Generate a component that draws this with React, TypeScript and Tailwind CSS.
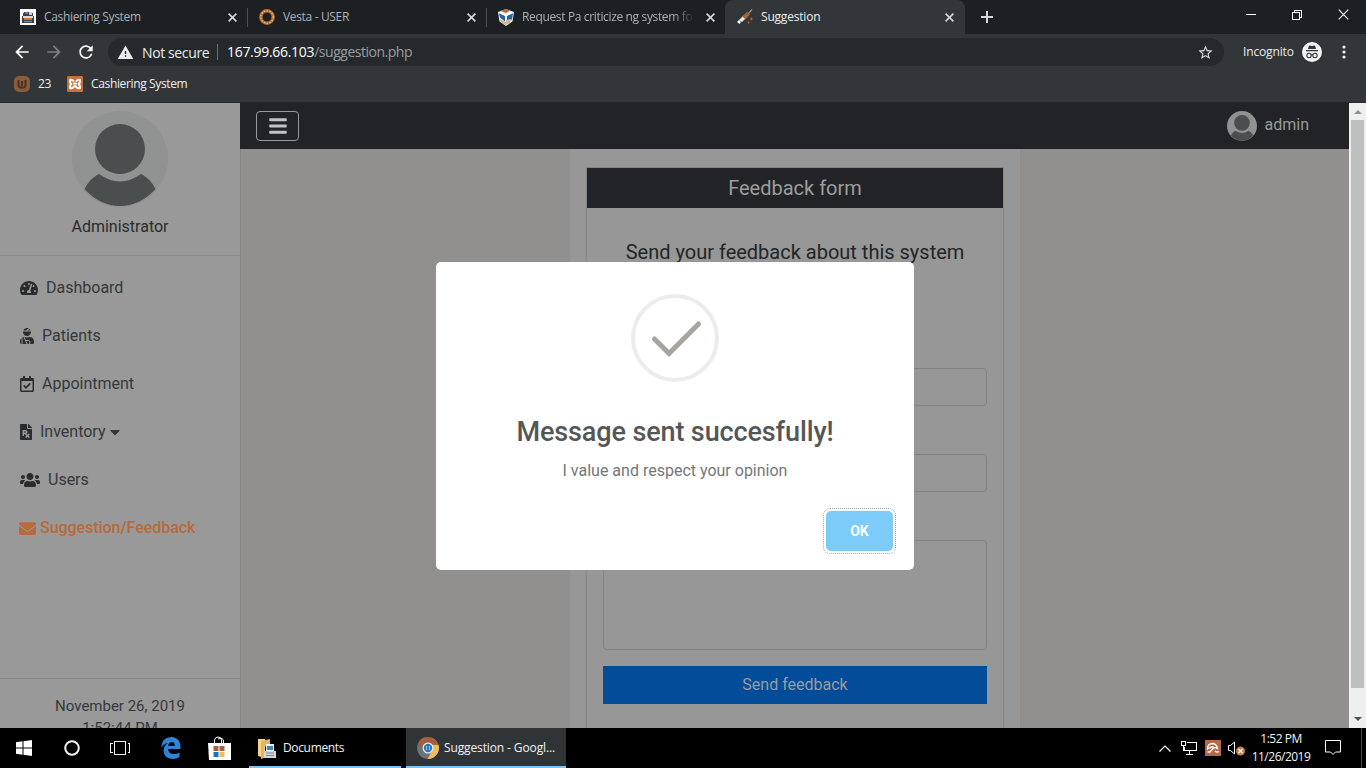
import type { ReactNode } from 'react'
import {
  FaBars,
  FaCaretDown,
  FaEnvelope,
  FaFilePrescription,
  FaRegCalendarCheck,
  FaTachometerAlt,
  FaUserInjured,
  FaUsers,
} from 'react-icons/fa'
import { MdArrowBack, MdArrowForward, MdRefresh, MdStarBorder, MdWarning } from 'react-icons/md'

interface Tab {
  title: string
  icon: ReactNode
  active?: boolean
}

const RegisterIcon = () => (
  <svg width="16" height="16" viewBox="0 0 16 16" shapeRendering="crispEdges">
    <rect width="16" height="16" fill="#fff" />
    <path d="M4 3h8l2 5v6H2V8z" fill="#3b4148" />
    <rect x="5" y="3" width="3" height="2" fill="#4c7fb5" />
    <rect x="9" y="3" width="3" height="3" fill="#cfd6dc" />
    <rect x="3" y="7" width="10" height="2" fill="#d8dadc" />
    <rect x="4" y="9" width="8" height="2" fill="#c8793f" />
    <rect x="4" y="12" width="8" height="1" fill="#8a9096" />
  </svg>
)

const VestaIcon = () => (
  <svg width="16" height="16" viewBox="0 0 16 16">
    <circle cx="8" cy="8" r="6.2" fill="none" stroke="#b06c38" strokeWidth="3.4" />
    <circle cx="8" cy="8" r="6.2" fill="none" stroke="#f0bd7c" strokeWidth="1.2" strokeDasharray="1.6 1.2" />
  </svg>
)

const CubeIcon = () => (
  <svg width="16" height="17" viewBox="0 0 16 17">
    <path d="M0 3L8 0l8 3-1.500 9.500L8 17l-6.500-4.500z" fill="#e9eef2" />
    <path d="M3 2l5-2 4 1.600-4 2.400z" fill="#b5643a" />
    <path d="M1 4.500l6 2v6L2 8.500zM9 6.500l6-2-1 6L9 12z" fill="#1f62a8" />
    <path d="M2 10l6 3v3.500L3 13zM8 11l5-1-1 4-4 2z" fill="#d8b48c" />
    <path d="M7 5h2l3-2 2 1-5 3v3H7V7L3 5l1-1z" fill="#fff" />
  </svg>
)

const SyringeIcon = () => (
  <svg width="16" height="16" viewBox="0 0 16 16">
    <path d="M11 5L15 .5" stroke="#8d8f90" strokeWidth="1.300" />
    <path d="M5 7.500L10 3l3 2.500L8 11z" fill="#a9623a" />
    <path d="M2 11l3.500-3.500L8 10 5 13z" fill="#e6e8e8" />
    <path d="M0 13l2-2L4 13l-1.500 2z" fill="#fff" />
    <path d="M12.800 10l1.500-2 1.500 2-1.500 1.500zM10.500 13.500l1-1.500 1.200 1.500-1.200 1.500z" fill="#a9623a" />
  </svg>
)

const tabs: Tab[] = [
  { title: 'Cashiering System', icon: <RegisterIcon /> },
  { title: 'Vesta - USER', icon: <VestaIcon /> },
  { title: 'Request Pa criticize ng system fo', icon: <CubeIcon /> },
  { title: 'Suggestion', icon: <SyringeIcon />, active: true },
]

const navItems = [
  { label: 'Dashboard', icon: <FaTachometerAlt size={18} /> },
  { label: 'Patients', icon: <FaUserInjured size={16} className="-mr-px -ml-px w-4" /> },
  { label: 'Appointment', icon: <FaRegCalendarCheck size={16} className="-mr-px -ml-px w-4" /> },
  { label: 'Inventory', icon: <FaFilePrescription size={16} className="w-3" />, caret: true },
  { label: 'Users', icon: <FaUsers size={20} /> },
]

function Cross({ size = 9, width = 1.6 }: { size?: number; width?: number }) {
  return (
    <svg width={size} height={size} viewBox="0 0 9 9" stroke="currentColor" strokeWidth={width}>
      <path d="M.6.6l7.800 7.800M8.400.6L.6 8.400" />
    </svg>
  )
}

function Avatar({ size, dim }: { size: number; dim?: boolean }) {
  return (
    <svg width={size} height={size} viewBox="0 0 96 96">
      <circle cx="48" cy="48" r="48" fill={dim ? '#8f9192' : '#919292'} />
      <circle cx="48" cy="38" r="25" fill="#4b4e4f" />
      <path d="M27 63Q48 78 69 63q9 4 14.500 15Q68 95 48 95T12.500 78Q18 67 27 63z" fill="#4b4e4f" />
    </svg>
  )
}

function TabStrip() {
  return (
    <div className="flex h-[34px] bg-[#1d2023] pl-2">
      {tabs.map((tab, i) => (
        <div
          key={tab.title}
          className={`relative flex items-center pl-3 ${
            tab.active
              ? 'w-60 rounded-t-lg bg-[#323639] pr-[11px] text-[#eceeef]'
              : 'w-[239px] pr-[10px] text-[#a9b1b8]'
          }`}
        >
          <span className="flex w-6 shrink-0">{tab.icon}</span>
          <span
            className={`flex-1 text-[12px] whitespace-nowrap ${
              i === 2
                ? 'tracking-[-0.35px] [mask-image:linear-gradient(to_right,black_88%,transparent)]'
                : i === 3
                  ? 'tracking-[-0.2px]'
                  : 'tracking-[-0.34px]'
            }`}
          >
            {tab.title}
          </span>
          <span className="ml-3 text-[#d5d8da]">
            <Cross />
          </span>
          {i < 2 && <span className="absolute top-2 -right-px h-[19px] w-px bg-[#4b4f53]" />}
        </div>
      ))}
      <div className="flex items-center pl-4 text-[#d5d8da]">
        <svg width="12" height="12" viewBox="0 0 12 12" stroke="currentColor" strokeWidth="2">
          <path d="M6 0v12M0 6h12" />
        </svg>
      </div>
      <div className="ml-auto flex h-[29px] items-center text-white">
        <span className="flex w-[46px] justify-center">
          <span className="h-px w-[10px] bg-white" />
        </span>
        <span className="flex w-[46px] justify-center">
          <svg width="10" height="10" viewBox="0 0 10 10" fill="none" stroke="currentColor" shapeRendering="crispEdges">
            <path d="M.5 2.500h7v7h-7zM2.500 2.500v-2h7v7h-2" />
          </svg>
        </span>
        <span className="flex w-[46px] justify-center">
          <Cross size={11} width={0.9} />
        </span>
      </div>
    </div>
  )
}

function AddressBar() {
  return (
    <div className="flex h-9 items-center bg-[#323639] pr-5 pl-3 text-[#e8eaec]">
      <MdArrowBack size={20} className="text-white" />
      <MdArrowForward size={20} className="ml-3 text-[#7b7f82]" />
      <MdRefresh size={20} className="ml-3 text-white" />
      <div className="ml-3 flex h-7 flex-1 items-center rounded-full bg-[#26292c] pr-[10px] pl-[9px] text-[14px] tracking-[-0.38px]">
        <MdWarning size={17} />
        <span className="ml-2 w-[75px] whitespace-nowrap">Not secure</span>
        <span className="mr-[9px] h-4 w-px bg-[#6c7073]" />
        <span className="pb-px tracking-[-0.3px] text-white">167.99.66.103</span>
        <span className="pb-px tracking-[-0.48px] text-[#979da2]">/suggestion.php</span>
        <MdStarBorder size={17} className="ml-auto text-[#d5d8da]" />
      </div>
      <span className="ml-[19px] w-[59px] text-[12px] tracking-[-0.15px]">Incognito</span>
      <svg width="20" height="20" viewBox="0 0 20 20">
        <circle cx="10" cy="10" r="10" fill="#f1f3f4" />
        <path d="M7 3.500l3 .6 3-.6 1 3.500H6zM4 8h12v1.200H4z" fill="#303437" />
        <g fill="none" stroke="#303437" strokeWidth="1.100">
          <circle cx="7" cy="13.500" r="2.200" />
          <circle cx="13" cy="13.500" r="2.200" />
          <path d="M9 13q1-.6 2 0" />
        </g>
      </svg>
      <svg width="4" height="14" viewBox="0 0 4 14" fill="#f1f3f4" className="ml-5">
        <circle cx="2" cy="2" r="1.600" />
        <circle cx="2" cy="7" r="1.600" />
        <circle cx="2" cy="12" r="1.600" />
      </svg>
    </div>
  )
}

function Bookmarks() {
  return (
    <div className="flex h-[33px] items-center border-b border-[#26292b] bg-[#323639] pb-[5px] pl-[14px] text-[12px] tracking-[-0.36px] text-[#eceeef]">
      <svg width="16" height="16" viewBox="0 0 16 16" className="mt-px">
        <rect width="16" height="16" rx="5" fill="#8a5a3c" />
        <path d="M4.500 4v5q0 3 3.500 2.500 3.500.5 3.500-2.500V4M8 5v5" fill="none" stroke="#4a3226" strokeWidth="2" />
      </svg>
      <span className="ml-2">23</span>
      <svg width="16" height="16" viewBox="0 0 16 16" className="mt-px ml-4">
        <rect width="16" height="16" rx="1" fill="#c9703a" />
        <g fill="none" stroke="#fff" strokeWidth="2" strokeLinecap="round" strokeLinejoin="round">
          <path d="M6.500 5Q5 3 3 4q-.5 2.500 1.500 4-2 1.500-1.500 4 2.500 1 4-1.500l1-.5 1 .5q1.500 2.500 4 1.500.5-2.500-1.500-4 2-1.500 1.500-4-2-1-3.500 1" />
          <path d="M7 7.500h2" />
        </g>
      </svg>
      <span className="ml-2">Cashiering System</span>
    </div>
  )
}

function Sidebar() {
  return (
    <aside className="flex w-[241px] shrink-0 flex-col border-r border-[#858585] bg-[#999999] text-[#35383a]">
      <div className="flex h-[153px] flex-col items-center border-b border-[#8c8c8c] pt-2">
        <Avatar size={96} />
        <span className="mt-2 text-[16px] leading-6 text-[#2a2c2e]">Administrator</span>
      </div>
      <nav className="flex flex-col pt-2">
        {navItems.map(item => (
          <a key={item.label} className="flex h-12 items-center gap-2 pl-5">
            <span className="flex pb-px text-[#2a2d2f]">{item.icon}</span>
            <span>{item.label}</span>
            {item.caret && <FaCaretDown size={16} className="-ml-[7px]" />}
          </a>
        ))}
        <a className="flex h-12 items-center gap-1 pl-[19px] font-medium tracking-[-0.05px] text-[#b9693a]">
          <FaEnvelope size={17} />
          <span>Suggestion/Feedback</span>
        </a>
      </nav>
      <div className="mt-auto h-[50px] overflow-hidden border-t border-[#858585] pt-4 text-center text-[15px] leading-[22px]">
        <p>November 26, 2019</p>
        <p>1:52:44 PM</p>
      </div>
    </aside>
  )
}

function FeedbackForm() {
  return (
    <div className="mx-auto w-[450px] bg-[#979797] px-4 pt-[18px]">
      <div className="flex h-full flex-col border-x border-t border-[#858585]">
        <h2 className="h-10 bg-[#222326] text-center text-[20px] leading-10 text-[#9d9d9d]">Feedback form</h2>
        <div className="flex flex-col px-4">
          <h3 className="mt-8 text-center text-[20px] leading-6 text-[#222527]">Send your feedback about this system</h3>
          <div className="mt-[104px] h-[38px] rounded border border-[#808384]" />
          <div className="mt-12 h-[38px] rounded border border-[#808384]" />
          <div className="mt-12 h-[110px] rounded border border-[#808384]" />
          <button className="mt-4 h-[38px] bg-[#034c9a] text-[16px] text-[#9c9c9c]">Send feedback</button>
        </div>
      </div>
    </div>
  )
}

function SuccessModal() {
  return (
    <div className="absolute top-[262px] left-[436px] flex h-[308px] w-[478px] flex-col items-center rounded-[5px] bg-white pt-8 font-[Roboto,sans-serif]">
      <svg width="88" height="88" viewBox="0 0 88 88" fill="none">
        <circle cx="44" cy="44" r="42" stroke="#ebecec" strokeWidth="4" />
        <path d="M23.500 45L38 59.500 67.500 30" stroke="#a6a59f" strokeWidth="5" strokeLinecap="round" />
      </svg>
      <h1 className="mt-[30px] text-[27px] leading-10 font-medium tracking-[-0.12px] text-[#555757]">
        Message sent succesfully!
      </h1>
      <p className="mt-[7px] text-[16px] leading-6 text-[#747778]">I value and respect your opinion</p>
      <button className="mt-[25px] mr-[18px] h-[46px] w-[73px] self-end rounded-[7px] border border-dotted border-[#8babb8] p-[2px]">
        <span className="flex h-full items-center justify-center rounded-[5px] bg-[#7ccbf8] text-[14px] font-bold text-white">
          OK
        </span>
      </button>
    </div>
  )
}

function Scrollbar() {
  return (
    <div className="flex w-[17px] shrink-0 flex-col items-center bg-[#eef0ef]">
      <div className="flex h-[17px] items-center text-[#8f9291]">
        <svg width="8" height="4" viewBox="0 0 8 4" fill="currentColor">
          <path d="M4 0l4 4H0z" />
        </svg>
      </div>
      <div className="h-[568px] w-[13px] bg-[#bcbfbd]" />
      <div className="mt-auto flex h-[18px] items-center text-[#4d5150]">
        <svg width="8" height="4" viewBox="0 0 8 4" fill="currentColor">
          <path d="M0 0h8L4 4z" />
        </svg>
      </div>
    </div>
  )
}

function Taskbar() {
  return (
    <div className="flex h-10 items-center bg-black text-[12px] tracking-[-0.2px] text-[#f2f2f2]">
      <svg width="16" height="16" viewBox="0 0 16 16" fill="#fff" className="ml-4">
        <path d="M0 2.300L6.500 1.300v6.200H0zM7.500 1.200L16 0v7.500H7.500zM0 8.500h6.500v6.200L0 13.700zM7.500 8.500H16V16l-8.500-1.200z" />
      </svg>
      <svg width="16" height="16" viewBox="0 0 16 16" fill="none" stroke="#f2f2f2" strokeWidth="2" className="ml-8">
        <circle cx="8" cy="8" r="6.800" />
      </svg>
      <svg
        width="20"
        height="14"
        viewBox="0 0 20 14"
        fill="none"
        stroke="#f2f2f2"
        shapeRendering="crispEdges"
        className="ml-[30px]"
      >
        <path d="M4.500.5h11v13h-11zM2.500 2.500h-2v9h2M17.500 2.500h2v9h-2" />
      </svg>
      <svg width="20" height="22" viewBox="0 0 20 22" className="ml-[31px]">
        <path
          d="M0 11Q1 0 10.500 0 20 .5 19.500 12H7q.5 5 6 5 3 0 5.500-1.500V20q-3 2-7 2-8.500-.5-9-8.500Q3 8 7 6 2.500 6.500 0 11zM7.200 9h6.600q0-4-3.100-4Q7.800 5 7.200 9z"
          fill="#2b86d9"
        />
      </svg>
      <svg width="24" height="24" viewBox="0 0 24 24" className="ml-[26px]">
        <path d="M7.500 8V4Q8 1 11 1q3.500 0 3.500 3v4M11 3q5-2 5.500 2v2" fill="none" stroke="#fff" />
        <path d="M1 7h23v17H2z" fill="#fff" />
        <path d="M6.500 10h5v5h-5zM12.500 10h5v5h-5z" fill="#a65f3d" />
        <path d="M6.500 16h5v5h-5z" fill="#1f6fc4" />
        <path d="M12.500 16h5v5h-5z" fill="#f0b95a" />
      </svg>
      <div className="ml-[18px] flex h-full w-[152px] items-center border-b-2 border-[#7cc5f3] pt-[2px] pl-[9px]">
        <svg width="18" height="21" viewBox="0 0 18 21">
          <path d="M0 1h7v19l-7-2z" fill="#f3d48a" />
          <path d="M3 3l9-2v6l-6 2v11l-3 1z" fill="#e2b45b" />
          <rect x="8" y="6" width="8" height="8" fill="#eaf1f5" />
          <rect x="9" y="8" width="6" height="4" fill="#3f83bd" />
          <path d="M6 13h12v7H6z" fill="#d2d7da" />
          <path d="M8 15h8M8 17.500h8" stroke="#7d868c" />
        </svg>
        <span className="ml-[7px] tracking-[-0.35px]">Documents</span>
      </div>
      <div className="ml-[5px] flex h-full w-[160px] items-center border-b-2 border-[#7cc5f3] bg-[#303437] pt-[2px] pl-[11px]">
        <svg width="22" height="22" viewBox="0 0 22 22">
          <circle cx="11" cy="11" r="11" fill="#6d7274" />
          <path d="M1.500 5.500A11 11 0 0 1 21.500 8H11L6 13z" fill="#a65f36" />
          <path d="M21.500 8A11 11 0 0 1 10.500 22l5-9V8z" fill="#f1bb58" />
          <circle cx="11" cy="11" r="5.500" fill="#dfeefa" />
          <circle cx="11" cy="11" r="4.200" fill="#2b78bd" />
          <path d="M9.500 9v4M12.500 9v4" stroke="#9cc5e8" />
        </svg>
        <span className="ml-[5px] tracking-[-0.12px] whitespace-nowrap">Suggestion - Googl...</span>
      </div>
      <div className="ml-auto flex items-center">
        <svg width="12" height="7" viewBox="0 0 12 7" fill="none" stroke="#fff" strokeWidth="1.200">
          <path d="M.5 6.500L6 1l5.500 5.500" />
        </svg>
        <svg
          width="17"
          height="14"
          viewBox="0 0 17 14"
          fill="none"
          stroke="#fff"
          shapeRendering="crispEdges"
          className="ml-[10px]"
        >
          <path d="M5.500 1.500h10v8h-12v-4M.5.5h4v4h-4zM2.500 4.500v5M8.500 9.500v3M5 13.500h7" />
        </svg>
        <svg width="16" height="16" viewBox="0 0 16 16" className="ml-[7px]">
          <rect width="16" height="16" fill="#b26a45" />
          <g fill="none" stroke="#fff" strokeWidth="1.300">
            <path d="M2.500 9Q2.500 3.500 8 3.500q3.500.5 4.500 5Q10.500 7 9 8 7 5.500 5 8q-1-.5-2.500 1z" />
            <path d="M8.500 8L5 12H2.500M10 11q2 2 4 .5" />
          </g>
        </svg>
        <svg width="17" height="15" viewBox="0 0 17 15" fill="none" className="ml-[7px]">
          <path d="M.5 4.500h2L6.500 1v12L2.500 9.500h-2z" stroke="#fff" />
          <circle cx="12.500" cy="10" r="4.500" fill="#c77d4a" />
          <path d="M10.500 8l4 4M14.500 8l-4 4" stroke="#fff" strokeWidth="1.200" />
        </svg>
        <div className="ml-[6px] w-[60px] text-center leading-[18px] tracking-[-0.5px] whitespace-nowrap">
          <p>1:52 PM</p>
          <p>11/26/2019</p>
        </div>
        <svg width="16" height="16" viewBox="0 0 16 16" fill="none" stroke="#fff" className="ml-[14px]">
          <path d="M.5.500h15v11.500h-5L8 14.500 5.500 12h-5z" />
        </svg>
        <span className="mr-1 ml-5 h-10 w-px bg-[#4c4c4c]" />
      </div>
    </div>
  )
}

export default function App() {
  return (
    <div className="relative flex h-[768px] w-[1366px] flex-col overflow-hidden bg-black font-['Open_Sans',sans-serif]">
      <TabStrip />
      <AddressBar />
      <Bookmarks />
      <div className="flex min-h-0 flex-1 font-[Roboto,sans-serif] text-[16px]">
        <Sidebar />
        <main className="flex min-w-0 flex-1 flex-col bg-[#92908e]">
          <header className="-ml-px flex h-[46px] shrink-0 items-center bg-[#222326] pr-10 pl-4">
            <button className="flex h-[30px] w-[43px] items-center justify-center rounded border border-[#97999b] text-[#c1c3c5]">
              <FaBars size={20} />
            </button>
            <div className="ml-auto flex items-center gap-2 text-[#989a9b]">
              <Avatar size={30} dim />
              <span className="pb-[2px]">admin</span>
            </div>
          </header>
          <div className="flex flex-1">
            <FeedbackForm />
          </div>
        </main>
        <Scrollbar />
      </div>
      <Taskbar />
      <SuccessModal />
    </div>
  )
}
